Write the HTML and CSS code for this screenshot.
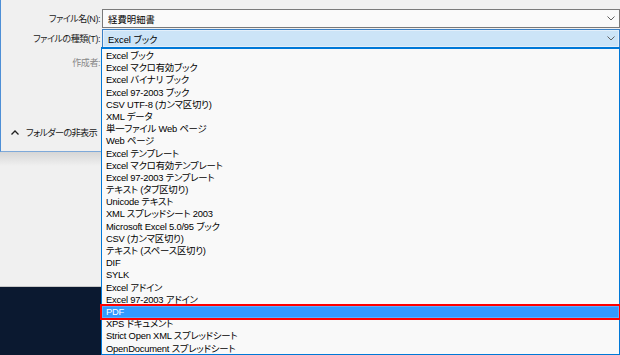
FILE: index.html
```html
<!DOCTYPE html>
<html lang="ja">
<head>
<meta charset="utf-8">
<title>名前を付けて保存</title>
<link rel="stylesheet" href="styles.css">
</head>
<body>
<div class="screen">
  <div class="backwin">
    <div class="dialog">
      <div class="row">
        <span class="label">ファイル名(N):</span>
        <div class="field">
          <span class="value">経費明細書</span>
          <svg class="chev" width="8" height="5" viewBox="0 0 8 5"><path d="M0.5 0.5 L4 4 L7.5 0.5" fill="none" stroke="#606060" stroke-width="1"/></svg>
        </div>
      </div>
      <div class="row">
        <span class="label">ファイルの種類(T):</span>
        <div class="field select">
          <span class="value">Excel ブック</span>
          <svg class="chev" width="8" height="5" viewBox="0 0 8 5"><path d="M0.5 0.5 L4 4 L7.5 0.5" fill="none" stroke="#606060" stroke-width="1"/></svg>
        </div>
      </div>
      <div class="row author">
        <span class="label dim">作成者:</span>
      </div>
      <div class="folder-toggle">
        <svg class="up" width="8" height="5" viewBox="0 0 8 5"><path d="M0.5 4.5 L4 1 L7.5 4.5" fill="none" stroke="#202020" stroke-width="1.3"/></svg>
        <span>フォルダーの非表示</span>
      </div>
    </div>
    <div class="shade"></div>
  </div>
  <ul class="dropdown">
    <li>Excel ブック</li>
    <li>Excel マクロ有効ブック</li>
    <li>Excel バイナリ ブック</li>
    <li>Excel 97-2003 ブック</li>
    <li>CSV UTF-8 (カンマ区切り)</li>
    <li>XML データ</li>
    <li>単一ファイル Web ページ</li>
    <li>Web ページ</li>
    <li>Excel テンプレート</li>
    <li>Excel マクロ有効テンプレート</li>
    <li>Excel 97-2003 テンプレート</li>
    <li>テキスト (タブ区切り)</li>
    <li>Unicode テキスト</li>
    <li>XML スプレッドシート 2003</li>
    <li>Microsoft Excel 5.0/95 ブック</li>
    <li>CSV (カンマ区切り)</li>
    <li>テキスト (スペース区切り)</li>
    <li>DIF</li>
    <li>SYLK</li>
    <li>Excel アドイン</li>
    <li>Excel 97-2003 アドイン</li>
    <li class="selected">PDF</li>
    <li>XPS ドキュメント</li>
    <li>Strict Open XML スプレッドシート</li>
    <li>OpenDocument スプレッドシート</li>
  </ul>
</div>
</body>
</html>
```
FILE: styles.css
```css
* { box-sizing: border-box; }
html, body { margin: 0; padding: 0; }
body {
  width: 620px;
  height: 355px;
  overflow: hidden;
  background: #0c1a30;
  font-family: "Liberation Sans", "Noto Sans CJK JP", sans-serif;
  font-size: 9.4px;
  font-feature-settings: "palt";
  color: #000;
}
.screen {
  position: relative;
  width: 620px;
  height: 355px;
  background: #0b1930;
}
.backwin {
  height: 287px;
  background: #f0f0f0;
  border-bottom: 1px solid #c8c8c8;
  display: flex;
  flex-direction: column;
}
.dialog {
  height: 152px;
  background: #f0f0f0;
  border-left: 1px solid #4d8fd6;
  border-bottom: 1px solid #7ea9d9;
  padding-top: 9px;
  display: flex;
  flex-direction: column;
  gap: 1px;
}
.shade {
  height: 14px;
  background: linear-gradient(#d6d6d6, #f0f0f0);
}
.row {
  display: grid;
  grid-template-columns: 101px 1fr;
  align-items: center;
}
.label {
  text-align: right;
  padding-right: 2px;
  white-space: nowrap;
  color: #1a1a1a;
  font-size: 9px;
  letter-spacing: -0.45px;
}
.label.dim { color: #888888; }
.row.author { margin-top: 6px; height: 14px; }
.field {
  height: 19px;
  background: #fafafa;
  border: 1px solid #7a7a7a;
  display: flex;
  align-items: center;
  justify-content: space-between;
  padding: 0 4px 0 5px;
}
.field.select {
  background: #cce4f7;
  border-color: #3a7fc4;
  box-shadow: inset 0 0 0 1px #e3effa;
}
.chev { display: block; }
.folder-toggle {
  margin-top: auto;
  margin-bottom: 12px;
  display: flex;
  align-items: center;
  gap: 7px;
  padding-left: 10px;
  height: 14px;
  color: #1a1a1a;
  font-size: 9.2px;
  letter-spacing: -0.7px;
}
.up { display: block; }
.dropdown {
  position: absolute;
  left: 101px;
  top: 47px;
  width: 519px;
  height: 308px;
  margin: 0;
  padding: 1px 0 0 0;
  list-style: none;
  background: #f9f9f9;
  border: 1px solid #0078d7;
  border-top-width: 2px;
}
.dropdown li {
  height: 12.2px;
  line-height: 12.2px;
  padding-left: 4px;
  white-space: nowrap;
  letter-spacing: -0.2px;
}
.dropdown li.selected {
  background: #3399ff;
  color: #fff;
  outline: 2px solid #ff0000;
  box-shadow: inset 0 0 0 1px #5aafff;
}
```
